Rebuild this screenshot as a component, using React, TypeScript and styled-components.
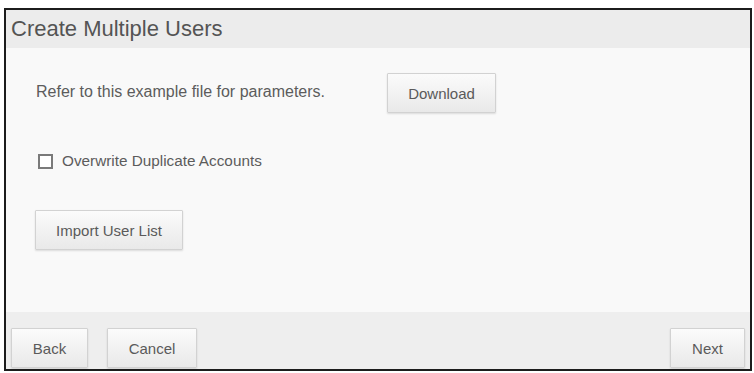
import React, { useState } from "react";
import styled, { createGlobalStyle } from "styled-components";

const GlobalStyle = createGlobalStyle`
  html, body {
    margin: 0;
    padding: 0;
    background: #ffffff;
    font-family: "Liberation Sans", Arial, sans-serif;
  }
`;

const Page = styled.div`
  padding: 8px 2px 2px 4px;
`;

const Panel = styled.div`
  width: 744px;
  height: 359px;
  border: 2px solid #1c1c1c;
  display: flex;
  flex-direction: column;
  background: #f9f9f9;
`;

const Header = styled.div`
  height: 38px;
  background: #ececec;
  display: flex;
  align-items: center;
  padding-left: 5px;
`;

const Title = styled.h1`
  margin: 0;
  font-weight: normal;
  font-size: 22px;
  color: #545454;
`;

const Body = styled.div`
  flex: 1;
  padding: 25px 0 0 26px;
  display: flex;
  flex-direction: column;
`;

const Row = styled.div<{ top?: number }>`
  display: flex;
  align-items: center;
  margin-top: ${(p) => p.top ?? 0}px;
`;

const Label = styled.span`
  width: 351px;
  padding-left: 4px;
  margin-top: -3px;
  font-size: 16px;
  color: #5c5c5c;
`;

const Button = styled.button<{ w: number }>`
  width: ${(p) => p.w}px;
  height: 40px;
  border: 1px solid #d2d2d2;
  border-radius: 1px;
  background: linear-gradient(#fbfbfb, #e9e9e9);
  box-shadow: 0 1px 2px rgba(0, 0, 0, 0.12);
  font-family: "Liberation Sans", Arial, sans-serif;
  font-size: 15px;
  color: #5a5a5a;
  cursor: pointer;
  padding: 0;
`;

const CheckLabel = styled.label`
  display: flex;
  align-items: center;
  gap: 9px;
  font-size: 15.3px;
  color: #5c5c5c;
  cursor: pointer;
`;

const Box = styled.span<{ checked: boolean }>`
  width: 11px;
  height: 11px;
  border: 2px solid #7a7a7a;
  background: #ffffff;
  margin-left: 6px;
  display: flex;
  align-items: center;
  justify-content: center;
  font-size: 11px;
  line-height: 1;
`;

const Footer = styled.div`
  height: 57px;
  background: #eeeeee;
  display: flex;
  align-items: flex-end;
  padding: 0 5px 1px 5px;
  box-sizing: border-box;
  gap: 19px;
`;

const Spacer = styled.div`
  flex: 1;
`;

export default function App() {
  const [checked, setChecked] = useState(false);
  return (
    <Page>
      <GlobalStyle />
      <Panel>
        <Header>
          <Title>Create Multiple Users</Title>
        </Header>
        <Body>
          <Row>
            <Label>Refer to this example file for parameters.</Label>
            <Button w={109}>Download</Button>
          </Row>
          <Row top={39}>
            <CheckLabel onClick={() => setChecked((c) => !c)}>
              <Box checked={checked}>{checked ? "✓" : ""}</Box>
              Overwrite Duplicate Accounts
            </CheckLabel>
          </Row>
          <Row top={40}>
            <Button w={148} style={{ marginLeft: 3 }}>
              Import User List
            </Button>
          </Row>
        </Body>
        <Footer>
          <Button w={77}>Back</Button>
          <Button w={90}>Cancel</Button>
          <Spacer />
          <Button w={75}>Next</Button>
        </Footer>
      </Panel>
    </Page>
  );
}
